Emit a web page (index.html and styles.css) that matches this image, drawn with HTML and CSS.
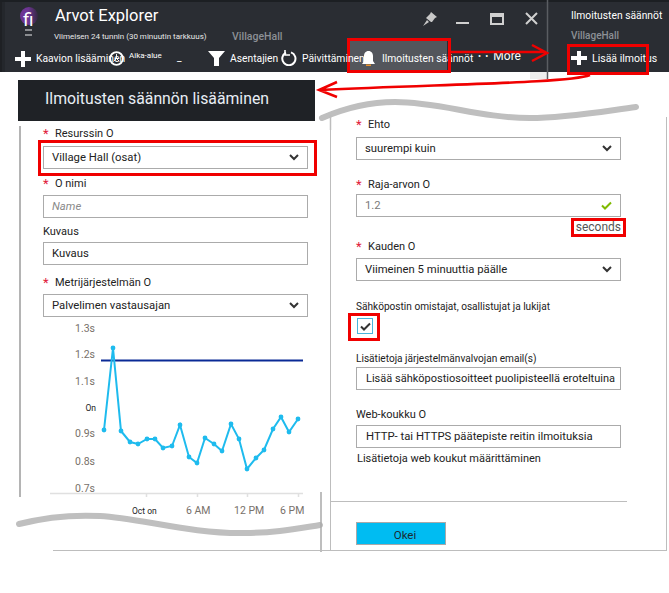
FILE: index.html
```html
<!DOCTYPE html>
<html lang="fi">
<head>
<meta charset="utf-8">
<title>Ilmoitusten säännön lisääminen</title>
<link rel="stylesheet" href="styles.css">
</head>
<body>
<div class="page">
  <header class="topbar">
    <div class="main-blade">
      <div class="title-row">
        <div class="logo">
          <span class="logo-fi">fi</span>
          <span class="logo-base"></span>
        </div>
        <div class="titles">
          <div class="app-title">Arvot Explorer</div>
          <div class="subtitle-row">
            <span class="subtitle">Viimeisen 24 tunnin (30 minuutin tarkkuus)</span>
            <span class="resource">VillageHall</span>
          </div>
        </div>
        <div class="window-controls">
          <svg class="wc wc-pin" width="16" height="16" viewBox="0 0 16 16"><path d="M9 1l6 5-2 1-3 4-1 0-5-4 4-4zM5 9l-4 6 6-4z" fill="#c8c8c8"/></svg>
          <span class="wc wc-min"></span>
          <span class="wc wc-max"></span>
          <svg class="wc wc-close" width="13" height="13" viewBox="0 0 13 13"><path d="M1 1l11 11M12 1L1 12" stroke="#d0d0d0" stroke-width="2"/></svg>
        </div>
      </div>
      <nav class="toolbar">
        <div class="tool tool-add">
          <svg width="16" height="16" viewBox="0 0 16 16"><path d="M6 0h4v6h6v4h-6v6H6v-6H0V6h6z" fill="#fff"/></svg>
          <span>Kaavion lisääminen</span>
        </div>
        <div class="tool tool-time">
          <svg width="15" height="15" viewBox="0 0 16 16"><circle cx="8" cy="8" r="6.800" fill="none" stroke="#fff" stroke-width="2"/><path d="M8 3v5l-3 3M8 8l3 3" fill="none" stroke="#fff"/></svg>
          <span class="tool-small">Aika-alue</span>
        </div>
        <div class="tool tool-under">_</div>
        <div class="tool tool-filter">
          <svg width="17" height="15" viewBox="0 0 17 15"><path d="M0 0h17l-6 7v8H6V7z" fill="#fff"/></svg>
          <span>Asentajien</span>
        </div>
        <div class="tool tool-refresh">
          <svg width="16" height="16" viewBox="0 0 16 16"><path d="M10 2.400a6.600 6.600 0 1 1-5 .3" fill="none" stroke="#fff" stroke-width="2"/><path d="M4 0v5h5" fill="none" stroke="#fff" stroke-width="1.600"/></svg>
          <span>Päivittäminen</span>
        </div>
        <div class="tool tool-alerts">
          <svg width="13" height="15" viewBox="0 0 13 15"><path d="M6.500 0C9.500 0 11 2.500 11 5v5l2 3H0l2-3V5C2 2.500 3.500 0 6.500 0z" fill="#fff"/><rect x="4" y="13.500" width="5" height="1.500" fill="#e8912d"/></svg>
          <span>Ilmoitusten säännöt</span>
        </div>
        <div class="tool tool-more"><span class="dots">• •</span><span>More</span></div>
      </nav>
    </div>
    <div class="side-blade">
      <div class="side-title">Ilmoitusten säännöt</div>
      <div class="side-resource">VillageHall</div>
      <div class="side-add">
        <svg width="16" height="14" viewBox="0 0 16 14"><path d="M6 0h4v5h6v4h-6v5H6V9H0V5h6z" fill="#fff"/></svg>
        <span>Lisää ilmoitus</span>
      </div>
    </div>
  </header>

  <main class="content">
    <section class="left-col">
      <h1 class="blade-header">Ilmoitusten säännön lisääminen</h1>
      <div class="left-body">
        <div class="label label-first"><i>*</i>Resurssin O</div>
        <div class="box select gap-4"><span>Village Hall (osat)</span><svg class="chev" width="10" height="7" viewBox="0 0 10 7"><path d="M1 1l4 4 4-4" fill="none" stroke="#333" stroke-width="2"/></svg></div>
        <div class="label mt-7"><i>*</i>O nimi</div>
        <div class="box gap-3 placeholder">Name</div>
        <div class="label mt-6">Kuvaus</div>
        <div class="box gap-2">Kuvaus</div>
        <div class="label mt-10"><i>*</i>Metrijärjestelmän O</div>
        <div class="box select gap-3"><span>Palvelimen vastausajan</span><svg class="chev" width="10" height="7" viewBox="0 0 10 7"><path d="M1 1l4 4 4-4" fill="none" stroke="#333" stroke-width="2"/></svg></div>
        <svg class="chart" width="300" height="175" viewBox="21 317 300 175">
          <g class="ticks">
            <text x="95" y="332" text-anchor="end">1.3s</text>
            <text x="95" y="358" text-anchor="end">1.2s</text>
            <text x="95" y="385" text-anchor="end">1.1s</text>
            <text x="96" y="411" text-anchor="end" class="dark">On</text>
            <text x="95" y="437" text-anchor="end">0.9s</text>
            <text x="95" y="465" text-anchor="end">0.8s</text>
            <text x="95" y="492" text-anchor="end">0.7s</text>
            <text x="132" y="514" class="dark">Oct on</text>
            <text x="186" y="514">6 AM</text>
            <text x="234" y="514">12 PM</text>
            <text x="280" y="514">6 PM</text>
          </g>
          <path d="M50 493.500H303M146.500 493v4M197.500 493v4M247.500 493v4M298.500 493v4" stroke="#e0e0e0" stroke-width="1.500" fill="none"/>
          <path d="M101 360.500H303" stroke="#0a2a96" stroke-width="2.200"/>
          <polyline class="series" points="104,430 113,348 121,431 130,442 138,444 147,439 155,439 163,448 172,446 180,425 189,457 197,463 205,438 214,444 222,451 231,424 239,439 247,469 256,458 264,450 273,429 281,417 289,432 298,419"/>
          <g class="pts">
            <circle cx="104" cy="430" r="2.400"/><circle cx="113" cy="348" r="2.400"/><circle cx="121" cy="431" r="2.400"/><circle cx="130" cy="442" r="2.400"/><circle cx="138" cy="444" r="2.400"/><circle cx="147" cy="439" r="2.400"/><circle cx="155" cy="439" r="2.400"/><circle cx="163" cy="448" r="2.400"/><circle cx="172" cy="446" r="2.400"/><circle cx="180" cy="425" r="2.400"/><circle cx="189" cy="457" r="2.400"/><circle cx="197" cy="463" r="2.400"/><circle cx="205" cy="438" r="2.400"/><circle cx="214" cy="444" r="2.400"/><circle cx="222" cy="451" r="2.400"/><circle cx="231" cy="424" r="2.400"/><circle cx="239" cy="439" r="2.400"/><circle cx="247" cy="469" r="2.400"/><circle cx="256" cy="458" r="2.400"/><circle cx="264" cy="450" r="2.400"/><circle cx="273" cy="429" r="2.400"/><circle cx="281" cy="417" r="2.400"/><circle cx="289" cy="432" r="2.400"/><circle cx="298" cy="419" r="2.400"/>
          </g>
        </svg>
      </div>
    </section>

    <section class="right-col">
      <div class="label"><i>*</i>Ehto</div>
      <div class="box select gap-4"><span>suurempi kuin</span><svg class="chev" width="10" height="7" viewBox="0 0 10 7"><path d="M1 1l4 4 4-4" fill="none" stroke="#333" stroke-width="2"/></svg></div>
      <div class="label mt-17"><i>*</i>Raja-arvon O</div>
      <div class="box select gap-1 value"><span>1.2</span><svg width="11" height="9" viewBox="0 0 11 9"><path d="M1 4.500l3 3 6-6" fill="none" stroke="#7fba00" stroke-width="2"/></svg></div>
      <div class="unit">seconds</div>
      <div class="label mt-4"><i>*</i>Kauden O</div>
      <div class="box select gap-3"><span>Viimeinen 5 minuuttia päälle</span><svg class="chev" width="10" height="7" viewBox="0 0 10 7"><path d="M1 1l4 4 4-4" fill="none" stroke="#333" stroke-width="2"/></svg></div>
      <div class="label label-small mt-18">Sähköpostin omistajat, osallistujat ja lukijat</div>
      <div class="checkbox"><svg width="11" height="9" viewBox="0 0 11 9"><path d="M1 4.500l3 3 6-6" fill="none" stroke="#333" stroke-width="2"/></svg></div>
      <div class="label label-small mt-17">Lisätietoja järjestelmänvalvojan email(s)</div>
      <div class="box box-indent box-tight">Lisää sähköpostiosoitteet puolipisteellä eroteltuina</div>
      <div class="label mt-17">Web-koukku O</div>
      <div class="box box-indent gap-2">HTTP- tai HTTPS päätepiste reitin ilmoituksia</div>
      <div class="help">Lisätietoja web koukut määrittäminen</div>
      <div class="rule"></div>
      <div class="ok">Okei</div>
    </section>
  </main>

  <svg class="overlay" width="669" height="593" viewBox="0 0 669 593">
    <rect x="530" y="72" width="17" height="7" fill="#eeeeee"/>
    <path d="M547.500 0V79" stroke="#5a5d62" stroke-width="1.500"/>
    <path class="wave" d="M322 118C345 108 372 102 395 102C440 102 480 118 530 118C565 118 605 111 636 107"/>
    <path d="M330.500 115V130" stroke="#bdbdbd" stroke-width="1.500"/>
    <rect x="17" y="518" width="306" height="32" fill="#fff"/>
    <path class="wave" d="M19 524C50 516 80 515 100 516C140 518 190 534 245 533C275 533 295 529 320 525"/>
    <path d="M321 492V552" stroke="#a9a9a9" stroke-width="1.500"/>
    <path d="M53 550.500H330" stroke="#bdbdbd" stroke-width="1"/>
    <g class="marks">
      <rect x="348.500" y="39.500" width="101" height="32"/>
      <rect x="568.500" y="45.500" width="79" height="28"/>
      <rect x="39.500" y="141.500" width="276" height="33"/>
      <rect x="572.500" y="219.500" width="52" height="16"/>
      <rect x="349.500" y="314.500" width="29" height="25"/>
    </g>
    <g class="arrows">
      <path d="M450 52H546M532 45l15 8-15 8"/>
      <path d="M590 75C570 83 450 84 320 90M337 82l-18 8 18 7"/>
    </g>
  </svg>
</div>
</body>
</html>
```

FILE: styles.css
```css
* { box-sizing: border-box; }
html, body { margin: 0; padding: 0; background: #fff; }
body { font-family: Roboto, "Liberation Sans", sans-serif; font-size: 12px; color: #222; }
.page { position: relative; width: 669px; height: 593px; overflow: hidden; background: #fff; }

/* top bar */
.topbar { display: flex; height: 72px; background: #2a2d33; border-top: 2px solid #1c1f23; color: #fff; }
.main-blade { width: 547px; padding-left: 6px; box-shadow: inset 2px 0 0 #1e2024, inset 5px 0 0 #24272c; display: flex; flex-direction: column; }
.title-row { display: flex; height: 44px; }
.logo { width: 48px; padding: 5px 0 0 14px; }
.logo-fi { display: block; width: 18px; height: 18px; border-radius: 50%; background: linear-gradient(90deg, #6d3594, #6d3594 45%, #33283f); color: #fff; font-size: 19px; line-height: 26px; padding-left: 3px; }
.logo-base { display: block; width: 7px; height: 7px; margin: 4px 0 0 5px; border-top: 2px solid #8b8d91; border-bottom: 2px solid #8b8d91; }
.titles { width: 372px; padding-top: 2px; }
.app-title { font-size: 16.500px; line-height: 24px; padding-left: 1px; }
.subtitle-row { display: flex; margin-top: 2px; line-height: 14px; }
.subtitle { width: 178px; font-size: 8px; color: #e8e8e8; white-space: nowrap; }
.resource { font-size: 10.500px; color: #8c9096; font-weight: 500; }
.window-controls { display: flex; align-items: flex-start; padding-top: 9px; }
.wc { display: block; flex: none; }
.wc-pin { margin-left: -4px; }
.wc-min { width: 13px; height: 2px; margin: 11px 0 0 18px; background: #d0d0d0; }
.wc-max { width: 14px; height: 12px; margin: 2px 0 0 21px; border: 2px solid #d0d0d0; border-top-width: 4px; }
.wc-close { margin: 1px 0 0 21px; }

.toolbar { display: flex; align-items: center; height: 26px; white-space: nowrap; }
.tool { display: flex; align-items: center; flex: none; font-size: 10.300px; height: 100%; }
.tool svg { flex: none; }
.tool-add { width: 103px; padding-left: 9px; gap: 5px; margin-top: -1px; }
.tool-time { width: 68px; gap: 5px; margin-top: -2px; }
.tool-small { font-size: 8px; margin-top: -6px; }
.tool-under { width: 31px; font-size: 10px; margin-top: -4px; }
.tool-filter { width: 73px; gap: 5px; margin-top: -2px; }
.tool-refresh { position: relative; z-index: 1; width: 69px; gap: 5px; margin-top: -2px; }
.tool-alerts { width: 97px; gap: 7px; margin-right: 31px; background: #53565c; height: 29px; padding: 5px 0 0 12px; align-self: flex-start; margin-top: -5px; }
.tool-more { margin-top: -6px; gap: 4px; font-size: 12px; }
.dots { font-size: 9px; letter-spacing: 1px; }

.side-blade { flex: 1; padding-left: 24px; display: flex; flex-direction: column; }
.side-title { font-size: 10.300px; line-height: 14px; margin-top: 7px; white-space: nowrap; }
.side-resource { font-size: 10px; font-weight: 500; color: #8c9096; line-height: 14px; margin-top: 6px; }
.side-add { display: flex; align-items: center; gap: 5px; margin-top: 8px; font-size: 10.500px; white-space: nowrap; }

/* panels */
.content { display: flex; align-items: flex-start; }
.left-col { width: 311px; margin-left: 19px; padding-top: 8px; }
.blade-header { margin: 0 0 0 -1px; width: 297px; height: 41px; background: #1f2226; color: #e8eef5; font-size: 15.800px; font-weight: 400; line-height: 37px; padding-left: 27px; white-space: nowrap; }
.left-body { height: 371px; border-left: 2px solid #b4b4b4; padding: 0 0 0 22px; }
.right-col { width: 337px; height: 434px; margin-top: 45px; border: 1px solid #bdbdbd; border-top: 0; padding-left: 25px; }

.label { display: flex; width: 265px; height: 16px; line-height: 16px; font-size: 11px; color: #222; white-space: nowrap; }
.label i { width: 12px; color: #e0203a; font-style: normal; font-size: 13px; }
.label-first { margin-top: 5px; }
.label-small { font-size: 10.100px; }
.mt-4 { margin-top: 4px; }
.mt-6 { margin-top: 6px; }
.mt-7 { margin-top: 7px; }
.mt-10 { margin-top: 10px; }
.mt-17 { margin-top: 17px; }
.mt-18 { margin-top: 18px; }
.gap-1 { margin-top: 1px; }
.gap-2 { margin-top: 2px; }
.gap-3 { margin-top: 3px; }
.gap-4 { margin-top: 4px; }

.box { display: flex; align-items: center; width: 265px; height: 23px; border: 1px solid #ababab; background: #fff; padding: 0 8px; font-size: 11.300px; color: #222; white-space: nowrap; }
.select { justify-content: space-between; }
.placeholder { color: #8a8a8a; font-style: italic; }
.value { color: #7a7a7a; }
.box-indent { padding-left: 9px; }
.box-tight { font-size: 11px; }
.unit { width: 265px; height: 16px; margin-top: 2px; line-height: 16px; text-align: right; font-size: 12px; color: #555; }
.checkbox { display: flex; align-items: center; justify-content: center; width: 16px; height: 16px; margin: 3px 0 0 1px; border: 1px solid #49b4dc; background: #fff; }
.help { height: 16px; margin: 3px 0 0 1px; line-height: 16px; font-size: 11px; white-space: nowrap; }
.rule { width: 296px; height: 1px; margin: 34px 0 0 -25px; background: #bdbdbd; }
.ok { width: 90px; height: 23px; margin-top: 20px; padding-left: 8px; border: 1px solid #a9a9a9; background: #00bcf2; text-align: center; line-height: 24px; font-size: 11.500px; color: #1a2b33; }

/* chart */
.chart { display: block; margin-left: -22px; overflow: visible; }
.ticks text { font-size: 10.500px; fill: #77706a; font-family: Roboto, sans-serif; }
.ticks .dark { font-size: 8.500px; fill: #222; }
.series { fill: none; stroke: #1ebbee; stroke-width: 2; }
.pts circle { fill: #1ebbee; }

/* annotations over the screenshot */
.overlay { position: absolute; left: 0; top: 0; pointer-events: none; }
.wave { fill: none; stroke: #bfbfbf; stroke-width: 6; stroke-linecap: round; }
.marks rect { fill: none; stroke: #f00000; stroke-width: 3; }
.arrows path { fill: none; stroke: #f00000; stroke-width: 2.500; }
```
